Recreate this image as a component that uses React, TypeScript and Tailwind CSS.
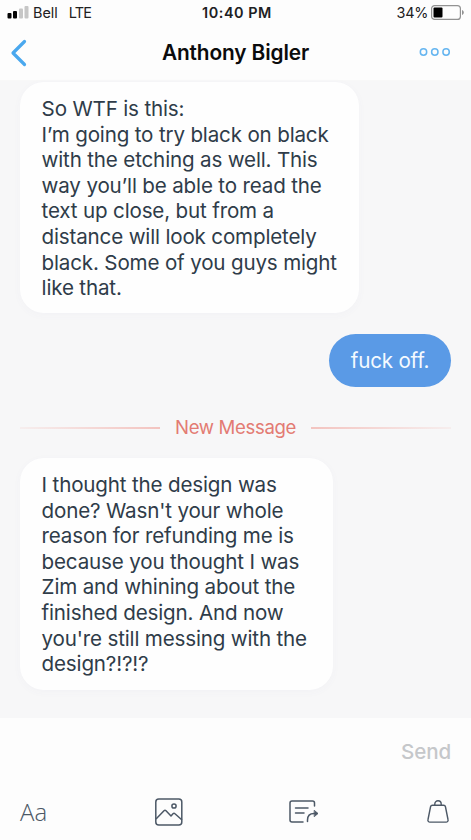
import React from 'react';

interface BubbleProps {
  lines: string[];
  className: string;
}

const firstMessage = [
  'So WTF is this:',
  'I’m going to try black on black',
  'with the etching as well. This',
  'way you’ll be able to read the',
  'text up close, but from a',
  'distance will look completely',
  'black. Some of you guys might',
  'like that.',
];

const secondMessage = [
  'I thought the design was',
  "done? Wasn't your whole",
  'reason for refunding me is',
  'because you thought I was',
  'Zim and whining about the',
  'finished design. And now',
  "you're still messing with the",
  'design?!?!?',
];

const Bubble: React.FC<BubbleProps> = ({ lines, className }) => (
  <div className={`rounded-[24px] bg-[#fefefe] pl-[21.6px] pt-[14px] text-[20.6px] leading-[25.6px] tracking-[-0.17px] text-[#2f3c49] shadow-[0_2px_8px_rgba(80,110,150,0.03)] ${className}`}>
    {lines.map((line) => (
      <p key={line} className="whitespace-nowrap">{line}</p>
    ))}
  </div>
);

const StatusBar: React.FC = () => (
  <div className="flex h-[26px] items-center justify-between pl-[7px] pr-[7px] text-[14.4px] text-[#202022]">
    <div className="flex w-[150px] items-center pb-px">
      <svg width="22" height="13" viewBox="0 0 22 13">
        <rect x="0.5" y="7" width="4" height="5.5" rx="1" fill="#050505" />
        <rect x="6" y="5" width="4" height="7.5" rx="1" fill="#050505" />
        <rect x="12" y="2.5" width="4" height="10" rx="1" fill="#c6c6c6" />
        <rect x="17.5" y="0" width="4" height="12.5" rx="1" fill="#c6c6c6" />
      </svg>
      <span className="ml-[4px]">Bell</span>
      <span className="ml-[11px] tracking-[-0.8px]">LTE</span>
    </div>
    <span className="pb-px pl-[3px] text-[14.4px] font-semibold tracking-[0.55px]">10:40 PM</span>
    <div className="flex w-[150px] items-center justify-end pb-px">
      <span className="tracking-[-0.3px]">34%</span>
      <svg className="ml-[3px]" width="33" height="15" viewBox="0 0 33 15" fill="none">
        <rect x="0.6" y="0.6" width="28.8" height="13.8" rx="3" stroke="#929292" strokeWidth="1.2" />
        <rect x="2.5" y="2.5" width="9" height="10" rx="1" fill="#000" />
        <path d="M31 5v5c1.4-.7 1.8-1.5 1.8-2.5S32.400 5.700 31 5Z" fill="#929292" />
      </svg>
    </div>
  </div>
);

const App: React.FC = () => {
  return (
    <div className="flex h-[840px] w-[471px] flex-col overflow-hidden bg-[#fdfdfd] font-['Inter','Liberation_Sans',sans-serif]">
      <StatusBar />

      <header className="flex h-[55px] items-center justify-between border-b border-[#f8f8f8] pl-[10px] pr-[20px]">
        <button className="flex w-[70px]" aria-label="Back">
          <svg width="18" height="28" viewBox="0 0 18 28" fill="none" stroke="#4aa8ee" strokeWidth="3.2" strokeLinecap="round" strokeLinejoin="round">
            <path d="M14.500 2.500 3 14l11.500 11.500" />
          </svg>
        </button>
        <h1 className="text-[20.8px] font-semibold tracking-[-0.1px] text-[#0b0b0c]">Anthony Bigler</h1>
        <button className="flex w-[60px] justify-end pb-[2px]" aria-label="More">
          <svg width="32" height="10" viewBox="0 0 32 10" fill="none" stroke="#65b5f0" strokeWidth="1.5">
            <circle cx="4.500" cy="5" r="3.200" />
            <circle cx="15.800" cy="5" r="3.200" />
            <circle cx="27.100" cy="5" r="3.200" />
          </svg>
        </button>
      </header>

      <main className="flex h-[637px] shrink-0 flex-col bg-[#f7f7f8] px-[20px] pt-px">
        <Bubble lines={firstMessage} className="h-[231px] w-[339px]" />

        <div className="mt-[21px] flex h-[53px] w-[122px] items-center justify-center self-end rounded-full bg-[#5a9ae6] pt-[2px] text-[20.6px] tracking-[-0.2px] text-[#f5faff]">
          fuck off.
        </div>

        <div className="mt-[28px] flex h-[26px] items-center">
          <div className="h-[2px] w-[140px] bg-linear-to-r from-[#f6eeee] to-[#f3c4c0]" />
          <span className="w-[151px] whitespace-nowrap pb-px text-center text-[18.6px] tracking-[-0.35px] text-[#e37b73]">New Message</span>
          <div className="h-[2px] w-[140px] bg-linear-to-r from-[#f3c4c0] to-[#f6eeee]" />
        </div>

        <Bubble lines={secondMessage} className="mt-[17px] h-[232px] w-[313px]" />
      </main>

      <footer className="flex flex-1 flex-col">
        <div className="flex h-[68px] items-center justify-end pr-[20px] text-[20.6px] font-medium tracking-[-0.15px] text-[#c5c7ca]">Send</div>
        <div className="flex h-[51px] items-center justify-between pl-[20px] pr-[22px] text-[#4c5866]">
          <span className="w-[28px] font-['Open_Sans',sans-serif] text-[24px] font-light">Aa</span>
          <svg className="ml-[2px]" width="28" height="28" viewBox="0 0 28 28" fill="none" stroke="currentColor" strokeWidth="1.500" strokeLinejoin="round">
            <rect x="0.8" y="1" width="26" height="26" rx="3" />
            <circle cx="19" cy="8" r="2.100" />
            <path d="m1 21 8-8.300q1-1 2 0l5 5.300 2-2.300q1-1 2 0L27 22" />
          </svg>
          <svg className="mr-[3px]" width="30" height="24" viewBox="0 0 30 24" fill="none" stroke="currentColor" strokeWidth="1.500" strokeLinecap="round" strokeLinejoin="round">
            <path d="M14 22H3a2 2 0 0 1-2-2V3a2 2 0 0 1 2-2h20.500a2 2 0 0 1 2 2v3M6.500 8H19M6.500 13H15M18.500 21.500V20q0-6.500 6.500-6.500h3" />
            <path d="M25.500 10.500 29 13.500l-3.500 3Z" fill="currentColor" strokeWidth="0.8" />
          </svg>
          <svg width="22" height="24" viewBox="0 0 22 24" fill="none" stroke="currentColor" strokeWidth="1.400" strokeLinejoin="round">
            <path d="M5.500 5.300h11a2 2 0 0 1 2 1.700L21 19.500a2 2 0 0 1-2 2.600H3A2 2 0 0 1 1 19.500L3.500 7a2 2 0 0 1 2-1.700ZM7.800 5.300V4a3.200 3.200 0 0 1 6.400 0v1.300" />
          </svg>
        </div>
      </footer>
    </div>
  );
};

export default App;
